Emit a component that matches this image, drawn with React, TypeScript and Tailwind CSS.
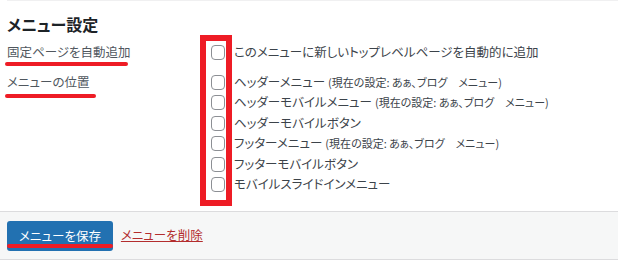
import React from 'react';

const jp = { fontFamily: '"Noto Sans CJK JP", "Noto Sans", sans-serif', fontFeatureSettings: '"palt"' };

const locations = [
  { name: 'ヘッダーメニュー', current: true },
  { name: 'ヘッダーモバイルメニュー', current: true },
  { name: 'ヘッダーモバイルボタン', current: false },
  { name: 'フッターメニュー', current: true },
  { name: 'フッターモバイルボタン', current: false },
  { name: 'モバイルスライドインメニュー', current: false },
];

function Box() {
  return <span className="w-[14px] h-[15px] shrink-0 rounded-[4px] border border-[#8c8f94] bg-white" />;
}

export default function App() {
  return (
    <div className="relative w-[618px] h-[260px] bg-white overflow-hidden text-[#3c434a]" style={jp}>
      <div className="ml-[7px] h-px bg-[#f0f0f1]" />

      <div className="pl-[7px] pt-[12px]">
        <h2 className="text-[16px] font-bold text-[#1d2327] leading-[22px]">メニュー設定</h2>

        <div className="flex mt-[6px]">
          <div className="w-[204px] text-[12.5px] text-[#50575e]">
            <div className="h-[20px] leading-[20px] mt-[1px]">固定ページを自動追加</div>
            <div className="h-[20px] leading-[20px] mt-[10px]">メニューの位置</div>
          </div>

          <div className="flex flex-col text-[12.5px]">
            <label className="flex items-center gap-[9px] h-[20px] mt-[1px]">
              <Box />
              <span>このメニューに新しいトップレベルページを自動的に追加</span>
            </label>
            <div className="mt-[10px] flex flex-col">
              {locations.map((l) => (
                <label key={l.name} className="flex items-center gap-[9px] h-[20.5px]">
                  <Box />
                  <span>
                    {l.name}
                    {l.current && (
                      <span className="text-[11px] ml-[3px]">(現在の設定: あぁ、ブログ　メニュー)</span>
                    )}
                  </span>
                </label>
              ))}
            </div>
          </div>
        </div>
      </div>

      <div className="absolute left-0 right-0 top-[211px] h-[49px] bg-[#f6f7f7] border-t border-b border-[#dcdcde] flex items-center pl-[7px] gap-[8px]">
        <button className="h-[30px] px-[12px] rounded-[3px] bg-[#2271b1] text-white text-[12.5px] leading-[30px]">
          メニューを保存
        </button>
        <a className="text-[12.5px] text-[#b32d2e] underline">メニューを削除</a>
      </div>

      {/* annotations */}
      <div className="absolute left-[200px] top-[35px] w-[32px] h-[171px] border-[6px] border-[#ee1c25]" />
      <div className="absolute left-[5px] top-[62px] w-[123px] h-[4px] rounded-full bg-[#ee1c25]" />
      <div className="absolute left-[5px] top-[94px] w-[91px] h-[4px] rounded-full bg-[#ee1c25]" />
      <div className="absolute left-[7px] top-[244px] w-[106px] h-[4px] rounded-full bg-[#ee1c25]" />
    </div>
  );
}
